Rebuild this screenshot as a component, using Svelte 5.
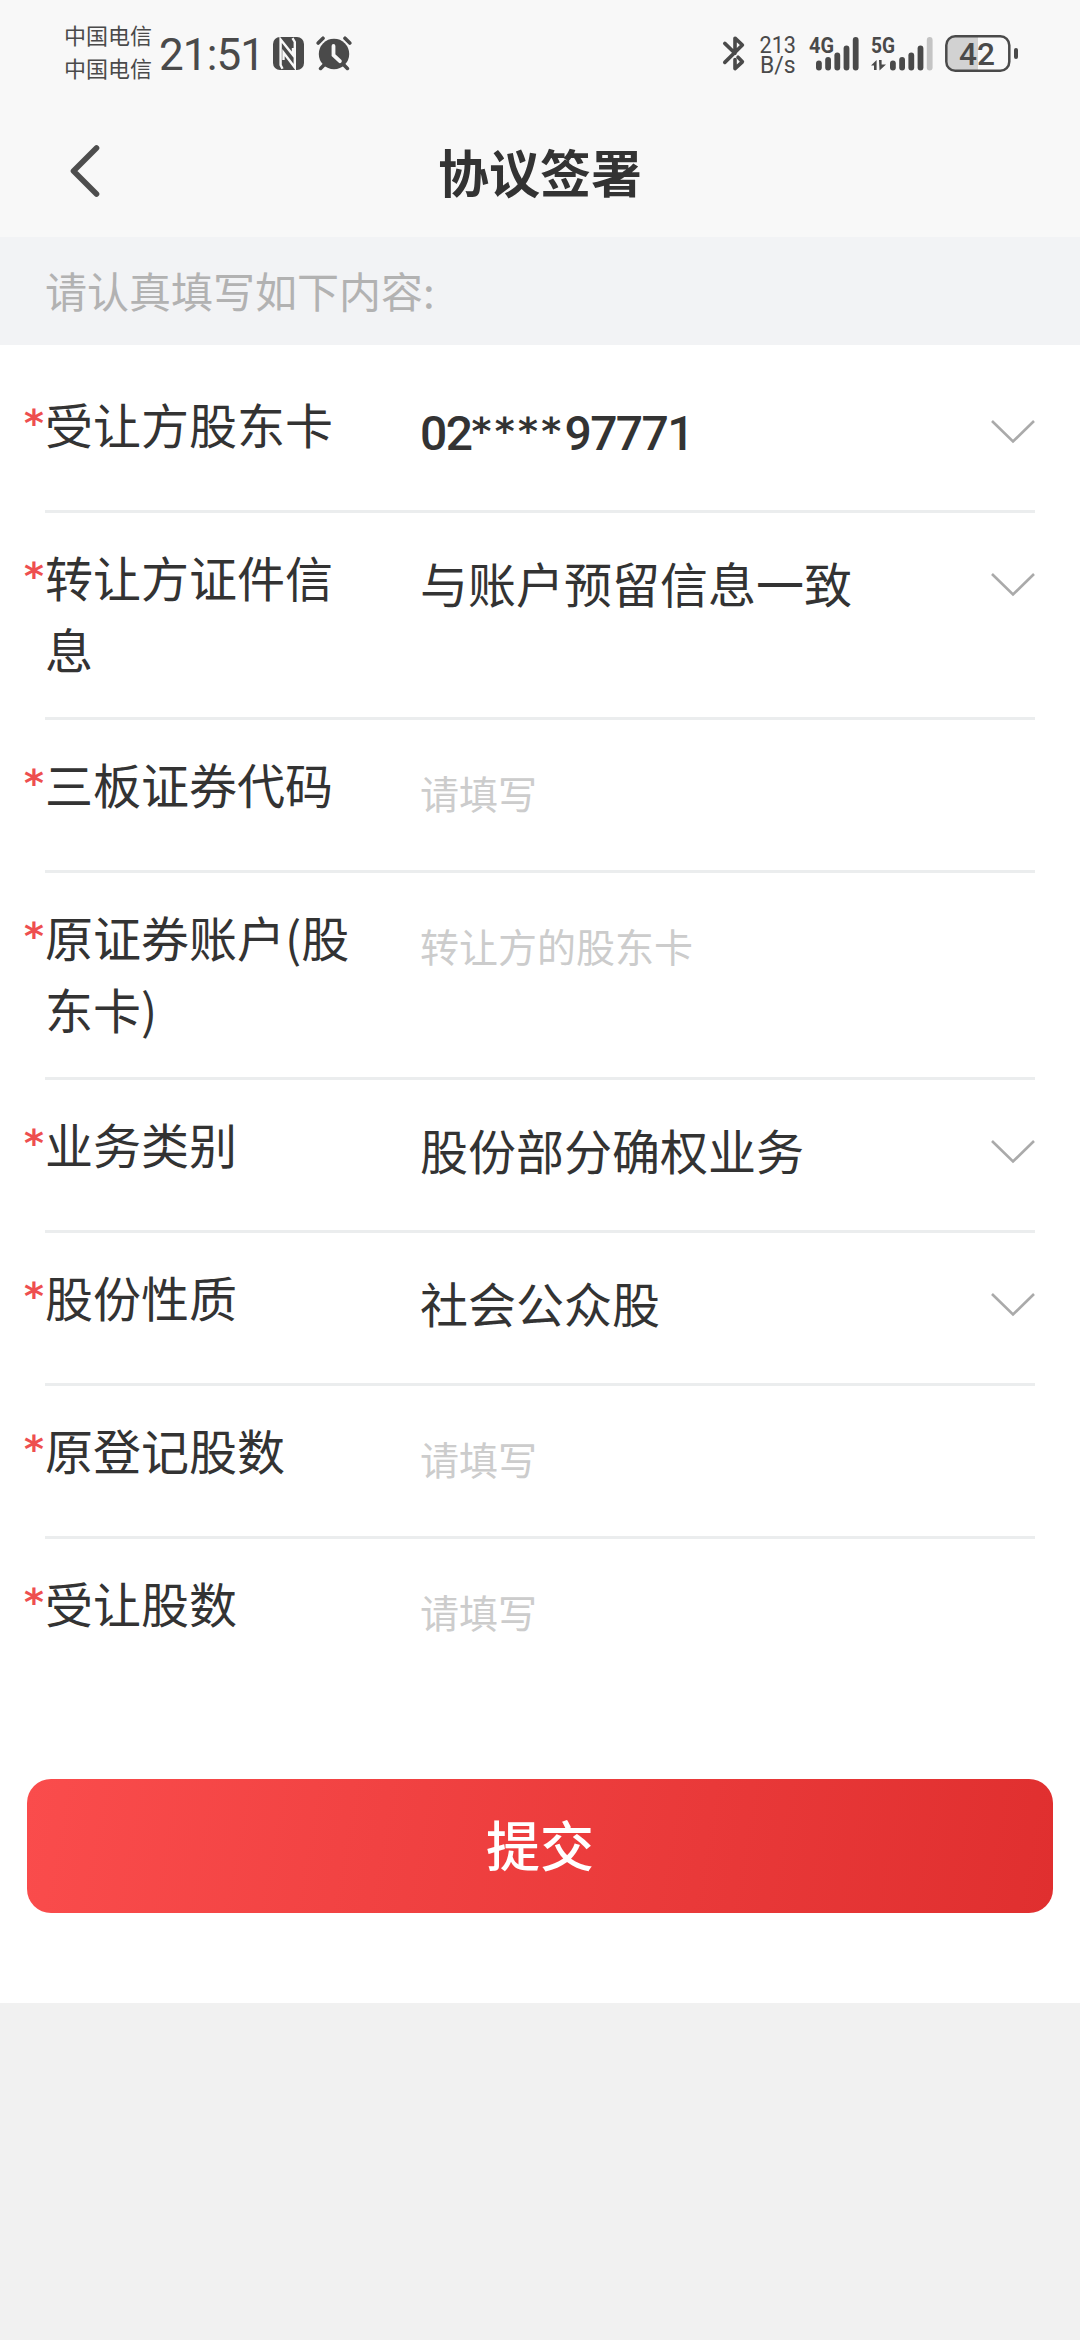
<script>
  const carriers = ["中国电信", "中国电信"];

  const fields = [
    { label: "受让方股东卡", value: "02****97771", select: true },
    { label: "转让方证件信息", value: "与账户预留信息一致", select: true },
    { label: "三板证券代码", placeholder: "请填写" },
    { label: "原证券账户(股东卡)", placeholder: "转让方的股东卡" },
    { label: "业务类别", value: "股份部分确权业务", select: true },
    { label: "股份性质", value: "社会公众股", select: true },
    { label: "原登记股数", placeholder: "请填写" },
    { label: "受让股数", placeholder: "请填写" },
  ];

  // masked account numbers mix digits and stars, which use different fonts
  const split = (text) => text.match(/\*+|[^*]+/g);

  const bars = [10, 13.5, 18, 25, 33.5];
</script>

<div class="page">
  <header>
    <div class="status">
      <div class="carriers">
        {#each carriers as carrier}
          <span>{carrier}</span>
        {/each}
      </div>
      <span class="clock">21:51</span>
      <svg class="nfc" width="31" height="33" viewBox="0 0 31 33">
        <rect width="31" height="33" rx="7" fill="#4a4a4a" />
        <path
          d="M9.5 31.8L7.6 28V2.5L20 18V11M19.5 1.2L21.8 5V30.5L10.5 15.5V23"
          fill="none"
          stroke="#f8f8f8"
          stroke-width="2.4"
        />
      </svg>
      <svg class="alarm" width="36" height="35" viewBox="0 0 36 35">
        <path
          d="M2.2 7L7 2.2M33.8 7L29 2.2M9 28L4.6 32.4M27 28L31.4 32.4"
          fill="none"
          stroke="#4a4a4a"
          stroke-width="3.6"
          stroke-linecap="round"
        />
        <circle cx="18" cy="18" r="15.2" fill="#4a4a4a" />
        <path
          d="M17.5 10v9.2l6.4 6"
          fill="none"
          stroke="#f8f8f8"
          stroke-width="3.8"
          stroke-linecap="round"
        />
      </svg>

      <div class="system">
        <svg width="22" height="35" viewBox="0 0 22 35">
          <path
            d="M1.8 7.4L12 17.2M12 15V2.2L19.4 9L1.8 26.4M15 21.2L19.4 25.8L12 32.6V23.5"
            fill="none"
            stroke="#4a4a4a"
            stroke-width="3.6"
            stroke-linejoin="round"
            stroke-linecap="round"
          />
        </svg>
        <svg class="speed" width="35" height="40" viewBox="0 0 35 40">
          <text x="-0.5" y="18.5" textLength="36.5" lengthAdjust="spacingAndGlyphs">213</text>
          <text x="0" y="39" textLength="35.5" lengthAdjust="spacingAndGlyphs">B/s</text>
        </svg>
        <svg class="signal" width="50" height="35" viewBox="0 0 50 35">
          <text x="0" y="17" textLength="25" lengthAdjust="spacingAndGlyphs">4G</text>
          {#each bars as h, i}
            <rect x={7 + i * 9.2} y={34.5 - h} width="5.8" height={h} rx="2.9" />
          {/each}
        </svg>
        <svg class="signal" width="62" height="35" viewBox="0 0 62 35">
          <text x="0" y="17" textLength="24" lengthAdjust="spacingAndGlyphs">5G</text>
          <path d="M0 29.5L5.6 24V34H3V29.5ZM8 24H10.6V28.5H15L8.5 34.5Z" />
          {#each bars as h, i}
            <rect
              class:off={i === 4}
              x={19 + i * 9.2}
              y={34.5 - h}
              width="5.8"
              height={h}
              rx="2.9"
            />
          {/each}
        </svg>
        <svg class="battery" width="73" height="37" viewBox="0 0 73 37">
          <path d="M33 2H11a9 9 0 0 0-9 9v15a9 9 0 0 0 9 9H33Z" fill="#d2d2d2" />
          <rect
            x="1.3"
            y="1.3"
            width="63"
            height="34.4"
            rx="9"
            fill="none"
            stroke="#4a4a4a"
            stroke-width="2.5"
          />
          <rect x="69" y="13" width="4" height="11" rx="2" fill="#4a4a4a" />
          <text x="14" y="30" textLength="36" lengthAdjust="spacingAndGlyphs">42</text>
        </svg>
      </div>
    </div>

    <nav>
      <svg class="back" width="30" height="54" viewBox="0 0 30 54">
        <path
          d="M26.5 4L3.5 27L26.5 50"
          fill="none"
          stroke="#4d4d4d"
          stroke-width="5.6"
          stroke-linecap="round"
          stroke-linejoin="round"
        />
      </svg>
      <h1>协议签署</h1>
    </nav>
  </header>

  <p class="notice">请认真填写如下内容:</p>

  <main>
    {#each fields as field}
      <div class="row">
        <span class="required">*</span>
        <div class="cell">
          <div class="label">{field.label}</div>
          {#if field.value}
            <div class="value">
              {#each split(field.value) as part}<span
                  class:stars={part[0] === "*"}
                  class:digits={/\d/.test(part)}>{part}</span
                >{/each}
            </div>
          {:else}
            <div class="value placeholder">{field.placeholder}</div>
          {/if}
          {#if field.select}
            <svg class="chevron" width="46" height="25" viewBox="0 0 46 25">
              <path d="M2 2L23 22.5L44 2" fill="none" stroke="#aaa" stroke-width="2.6" />
            </svg>
          {/if}
        </div>
      </div>
    {/each}

    <button>提交</button>
  </main>
</div>

<style>
  :global(body) {
    background: #f1f1f1;
  }

  .page {
    width: 1080px;
    min-height: 2340px;
    background: #f1f1f1;
    color: #333;
    font-family: "Noto Sans CJK SC", sans-serif;
  }

  header {
    height: 237px;
    background: #f8f8f8;
  }

  .status {
    display: flex;
    align-items: center;
    box-sizing: border-box;
    height: 107px;
    padding: 0 62px 0 64px;
    color: #4a4a4a;
  }

  .carriers {
    display: flex;
    flex-direction: column;
    width: 88px;
    margin-top: -6px;
    font-size: 22px;
    line-height: 33px;
  }

  .clock {
    width: 106px;
    margin: 3px 0 0 7px;
    font-family: Roboto, sans-serif;
    font-size: 44px;
    letter-spacing: -0.9px;
    white-space: nowrap;
  }

  .nfc {
    margin-left: 8px;
  }

  .alarm {
    margin-left: 12px;
  }

  .system {
    display: flex;
    align-items: center;
    gap: 12px;
    margin-left: auto;
  }

  .system svg {
    display: block;
    overflow: visible;
    fill: #4a4a4a;
    font-family: Roboto, sans-serif;
  }

  .system .speed {
    margin: 0 2px 0 3px;
    font-size: 24px;
  }

  .signal {
    font-size: 22px;
    font-weight: 700;
  }

  .signal .off {
    fill: #c4c4c4;
  }

  .battery {
    font-size: 32px;
    font-weight: 500;
  }

  nav {
    display: grid;
    grid-template-columns: 1fr auto 1fr;
    align-items: center;
    height: 128px;
  }

  .back {
    margin-left: 70px;
  }

  h1 {
    margin: 0;
    font-size: 51px;
    line-height: 72px;
    font-weight: 700;
  }

  .notice {
    box-sizing: border-box;
    height: 108px;
    margin: 0;
    padding-left: 45px;
    background: #f2f3f5;
    color: #b2b2b2;
    font-size: 42px;
    line-height: 106px;
  }

  main {
    box-sizing: border-box;
    height: 1658px;
    padding-top: 15px;
    background: #fff;
  }

  .row {
    display: grid;
    grid-template-columns: 45px 1fr;
    padding-right: 45px;
  }

  .required {
    padding: 27px 0 0 24px;
    color: #ee4f4f;
    font-family: "DejaVu Sans", sans-serif;
    font-size: 38px;
    font-weight: 700;
    line-height: 72px;
  }

  .cell {
    display: flex;
    align-items: flex-start;
    min-height: 93px;
    padding: 27px 0 30px;
    border-bottom: 3px solid #ebedee;
  }

  .row:nth-last-child(2) .cell {
    border-bottom-color: transparent;
  }

  .label {
    flex: none;
    width: 320px;
    margin-right: 55px;
    padding-bottom: 3px;
    font-size: 48px;
    line-height: 72px;
    word-break: break-all;
  }

  .value {
    flex: 1;
    height: 72px;
    padding-top: 6px;
    font-size: 48px;
    line-height: 72px;
    white-space: nowrap;
  }

  .placeholder {
    padding-top: 9px;
    color: #ccc;
    font-size: 39px;
  }

  .digits {
    font-family: Roboto, sans-serif;
    font-weight: 500;
    letter-spacing: -1.6px;
  }

  .stars {
    font-family: "DejaVu Sans", sans-serif;
    font-size: 38px;
    font-weight: 700;
    line-height: 0;
    letter-spacing: 3.4px;
    vertical-align: 6px;
  }

  .chevron {
    margin: 32px -1px 0 0;
  }

  button {
    display: block;
    width: 1026px;
    height: 134px;
    margin: 87px 27px 0;
    padding: 0 0 6px;
    border: 0;
    border-radius: 24px;
    background: linear-gradient(100deg, #fa4c4c, #e02f2f);
    color: #fff;
    font-family: inherit;
    font-size: 54px;
    font-weight: 500;
  }
</style>
